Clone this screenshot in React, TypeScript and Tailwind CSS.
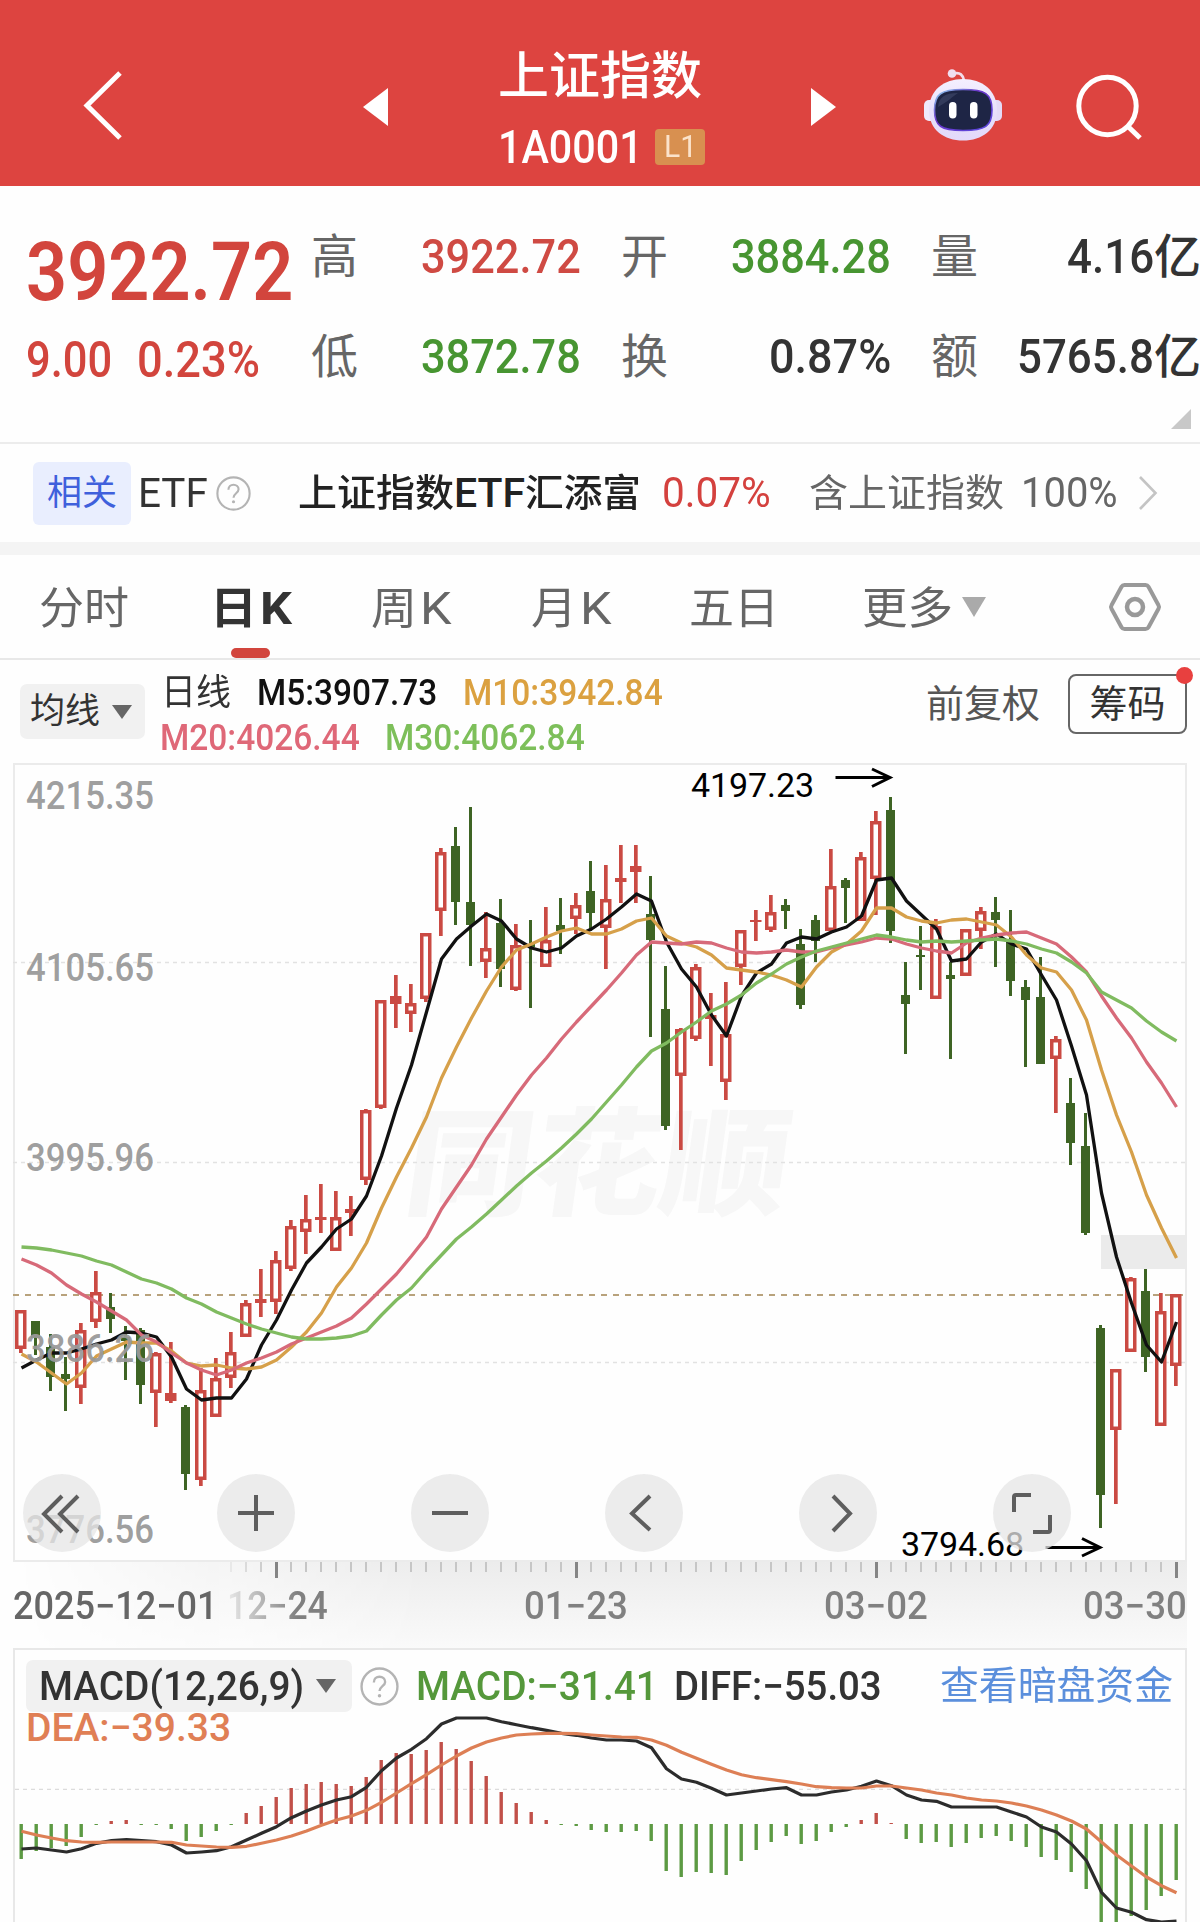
import { useLayoutEffect, useRef, type ReactNode } from 'react';

type Candle = [kind: 'r' | 'g', high: number, top: number, bottom: number, low: number];

const STEP = 15;

// y values are in chart pixels
const CANDLES: Candle[] = [
  ['r', 550, 550, 589, 593], ['g', 561, 561, 578, 595], ['g', 574, 587, 617, 631], ['g', 597, 614, 619, 651],
  ['r', 563, 570, 628, 644], ['r', 511, 532, 562, 568], ['g', 533, 547, 559, 573], ['g', 566, 577, 581, 620],
  ['g', 568, 570, 625, 644], ['r', 592, 593, 633, 667], ['r', 582, 633, 641, 643], ['g', 645, 647, 714, 730],
  ['r', 608, 630, 720, 726], ['r', 598, 618, 657, 657], ['r', 572, 592, 618, 628], ['r', 540, 543, 577, 577],
  ['r', 509, 539, 543, 557], ['r', 491, 500, 542, 554], ['r', 460, 466, 509, 511], ['r', 435, 459, 472, 494],
  ['r', 424, 457, 460, 473], ['r', 431, 457, 491, 491], ['r', 436, 449, 453, 476], ['r', 349, 350, 420, 425],
  ['r', 240, 240, 348, 349], ['r', 215, 236, 244, 268], ['r', 224, 243, 254, 272], ['r', 173, 173, 239, 242],
  ['r', 88, 92, 151, 176], ['g', 67, 86, 142, 165], ['g', 47, 142, 165, 206], ['r', 152, 188, 202, 218],
  ['g', 139, 163, 209, 227], ['r', 164, 185, 230, 231], ['g', 160, 184, 187, 248], ['r', 147, 180, 207, 207],
  ['g', 138, 165, 171, 194], ['r', 133, 145, 159, 174], ['g', 101, 131, 153, 171], ['r', 105, 139, 168, 209],
  ['r', 85, 118, 122, 143], ['r', 85, 106, 112, 143], ['g', 116, 154, 180, 277], ['g', 206, 249, 366, 370],
  ['r', 268, 269, 316, 390], ['r', 204, 207, 279, 281], ['r', 233, 255, 259, 306], ['r', 222, 274, 322, 340],
  ['r', 170, 170, 207, 225], ['r', 150, 160, 162, 181], ['r', 135, 152, 170, 172], ['g', 139, 145, 151, 169],
  ['g', 169, 184, 245, 249], ['g', 155, 160, 181, 202], ['r', 89, 126, 171, 171], ['g', 118, 120, 128, 163],
  ['r', 92, 97, 161, 161], ['r', 51, 61, 119, 155], ['g', 37, 50, 171, 183], ['g', 202, 235, 244, 294],
  ['g', 166, 195, 197, 230], ['r', 159, 166, 239, 239], ['g', 202, 215, 219, 299], ['r', 169, 169, 216, 216],
  ['r', 147, 151, 171, 189], ['g', 137, 152, 160, 207], ['g', 150, 180, 221, 236], ['g', 220, 227, 240, 307],
  ['g', 197, 237, 304, 304], ['r', 276, 279, 299, 353], ['g', 318, 343, 383, 405], ['g', 353, 386, 473, 475],
  ['g', 565, 568, 735, 768], ['r', 609, 609, 670, 744], ['r', 517, 518, 592, 592], ['g', 509, 531, 597, 612],
  ['r', 533, 551, 666, 666], ['r', 534, 534, 606, 626],
];

const M5 = [
  608, 600, 593, 593, 589, 584, 580, 572, 573, 577, 597, 629, 640, 638, 638, 619, 585, 560, 530, 503, 487, 469, 459,
  436, 396, 348, 305, 252, 199, 179, 166, 154, 161, 179, 188, 192, 188, 176, 169, 159, 147, 134, 141, 182, 209, 227,
  255, 276, 236, 213, 204, 183, 177, 179, 172, 167, 156, 120, 118, 141, 155, 169, 201, 199, 182, 174, 184, 189, 215,
  240, 286, 335, 433, 497, 543, 585, 602, 562,
];
const M10 = [
  594, 602, 613, 624, 613, 596, 589, 582, 583, 583, 591, 603, 606, 605, 608, 609, 607, 600, 587, 572, 553, 527, 508,
  483, 448, 417, 388, 357, 318, 287, 258, 231, 207, 190, 184, 177, 171, 168, 174, 174, 169, 161, 158, 176, 183, 187,
  195, 208, 210, 212, 215, 220, 227, 207, 192, 184, 171, 148, 148, 157, 161, 163, 160, 159, 162, 165, 177, 195, 208,
  212, 230, 260, 310, 355, 392, 435, 468, 498,
];
const M20 = [
  499, 505, 513, 525, 534, 542, 551, 560, 575, 582, 593, 603, 610, 615, 610, 603, 598, 592, 584, 578, 572, 566, 558,
  544, 529, 514, 496, 477, 449, 427, 405, 379, 357, 335, 315, 298, 279, 262, 246, 230, 213, 195, 182, 183, 184, 182,
  183, 188, 192, 193, 192, 190, 192, 192, 188, 185, 182, 178, 179, 184, 188, 191, 193, 183, 178, 175, 173, 172, 178,
  184, 197, 212, 236, 258, 278, 302, 323, 347,
];
const M30 = [
  487, 488, 490, 493, 496, 501, 505, 512, 519, 523, 529, 538, 544, 552, 558, 564, 569, 573, 577, 579, 579, 578, 576,
  571, 555, 540, 528, 511, 495, 479, 467, 454, 440, 426, 413, 401, 388, 374, 359, 342, 325, 307, 291, 283, 272, 262,
  251, 244, 235, 223, 214, 204, 197, 191, 187, 183, 179, 175, 177, 180, 182, 181, 182, 181, 180, 179, 181, 184, 189,
  193, 202, 213, 232, 240, 248, 261, 272, 281,
];

// histogram heights, positive goes down (green)
const MACD_BARS = [
  35, 27, 24, 22, 13, 1, -3, -4, 1, 1, 5, 17, 13, 7, 1, -11, -18, -27, -36, -40, -42, -40, -38, -47, -64, -71, -70,
  -74, -82, -75, -63, -48, -32, -21, -12, -4, 1, 2, 6, 8, 8, 7, 17, 47, 53, 48, 49, 51, 37, 26, 18, 12, 20, 17, 8, 3,
  -4, -11, -1, 15, 19, 18, 23, 19, 14, 12, 17, 23, 33, 36, 48, 65, 100, 100, 92, 86, 72, 56,
];
// DIFF and DEA are stored in thirds of a pixel
const DIFF = [
  627, 624, 630, 636, 626, 610, 602, 599, 602, 605, 615, 639, 636, 632, 620, 600, 580, 560, 533, 513, 495, 480, 470,
  442, 392, 354, 328, 296, 252, 234, 234, 234, 245, 254, 263, 271, 280, 286, 294, 300, 300, 303, 323, 386, 417, 427,
  445, 465, 459, 453, 447, 443, 465, 465, 456, 450, 439, 423, 437, 465, 480, 484, 501, 501, 501, 501, 516, 531, 561,
  576, 612, 662, 757, 804, 817, 839, 846, 843,
];
const DEA = [
  574, 585, 594, 602, 606, 607, 606, 606, 606, 606, 607, 615, 618, 621, 622, 619, 610, 600, 588, 573, 556, 540, 528,
  511, 487, 459, 431, 404, 375, 348, 324, 306, 294, 285, 282, 280, 280, 281, 285, 288, 291, 292, 300, 316, 337, 355,
  373, 390, 404, 413, 419, 425, 432, 440, 443, 444, 444, 438, 438, 444, 450, 459, 465, 474, 480, 483, 489, 498, 510,
  525, 543, 567, 606, 645, 678, 711, 737, 758,
];

const AXIS_LABELS = [
  { text: '4215.35', y: 49 },
  { text: '4105.65', y: 221 },
  { text: '3995.96', y: 411 },
  { text: '3886.26', y: 601.5 },
  { text: '3776.56', y: 783 },
];

function toPoints(values: number[], scale = 1) {
  return values.map((v, i) => `${21.5 + i * STEP},${(v * scale).toFixed(1)}`).join(' ');
}

// Squeezes or stretches one line of text to exactly `w` pixels
function Fit({ w, className = '', children }: { w: number; className?: string; children: ReactNode }) {
  const ref = useRef<HTMLSpanElement>(null);

  useLayoutEffect(() => {
    const el = ref.current;
    if (el) el.style.transform = `scaleX(${w / el.offsetWidth})`;
  }, [w, children]);

  return (
    <span className={`block shrink-0 ${className}`} style={{ width: w }}>
      <span ref={ref} className="inline-block origin-left align-top whitespace-nowrap">
        {children}
      </span>
    </span>
  );
}

function Robot() {
  return (
    <svg width="78" height="72" viewBox="0 0 78 72">
      <defs>
        <linearGradient id="shell" x1="0" y1="0" x2="0" y2="1">
          <stop offset="0" stopColor="#f4efff" />
          <stop offset="0.6" stopColor="#e6defa" />
          <stop offset="1" stopColor="#e3d9fb" />
        </linearGradient>
        <linearGradient id="rim" x1="0" y1="0" x2="1" y2="1">
          <stop offset="0" stopColor="#8fd8f0" />
          <stop offset="0.4" stopColor="#6a35c9" />
          <stop offset="1" stopColor="#5a4be0" />
        </linearGradient>
      </defs>
      <path d="M30 4.5c6-1.500 9 1.500 10 7" fill="none" stroke="#f3dcea" strokeWidth="2.800" />
      <circle cx="28" cy="4.500" r="4.300" fill="#f0def0" />
      <rect x="0" y="31" width="12" height="21" rx="5" fill="#efe9fb" />
      <rect x="66" y="31" width="12" height="21" rx="5" fill="#e4dbf7" />
      <path d="M39 10c19 0 34 11 34 31S58 71.500 39 71.500 5 61 5 41 20 10 39 10Z" fill="url(#shell)" />
      <path
        d="M39 20.500c22 0 29 4 29 20.500S61 61.500 39 61.500 10.500 57 10.500 41 17 20.500 39 20.500Z"
        fill="#1e2545"
        stroke="url(#rim)"
        strokeWidth="1.600"
      />
      <path d="M14 38c1-10 7-14 20-14-6 4-9 8-20 14Z" fill="#5b6588" opacity="0.35" />
      <rect x="25" y="33" width="7.500" height="16.500" rx="3.700" fill="#fff" />
      <rect x="46" y="33" width="7.500" height="16.500" rx="3.700" fill="#fff" />
    </svg>
  );
}

function Header() {
  return (
    <header className="flex h-[186px] shrink-0 bg-[#dd4440] text-white">
      <svg className="mt-[70px] ml-[82px] shrink-0" width="42" height="72" viewBox="0 0 42 72">
        <path d="M38 3 5 35.500 38 68" fill="none" stroke="#fff" strokeWidth="5" />
      </svg>
      <svg className="mt-[88px] ml-[239px] shrink-0" width="25" height="38" viewBox="0 0 25 38">
        <path d="M25 0v38L0 19Z" fill="#fff" />
      </svg>
      <div className="mt-[47px] ml-[110px] w-[210px] shrink-0">
        <Fit w={204} className="text-[51px]/[60px] font-medium">上证指数</Fit>
        <div className="flex h-[80px] items-center">
          <Fit w={145} className="text-[47px]/[80px] font-medium">1A0001</Fit>
          <span className="ml-[12px] flex h-9 w-[50px] items-center justify-center rounded-[4px] bg-[#d89050] text-[#fbe3cb]">
            <Fit w={33} className="text-[31px]/[36px]">L1</Fit>
          </span>
        </div>
      </div>
      <svg className="mt-[88px] ml-[103px] shrink-0" width="25" height="38" viewBox="0 0 25 38">
        <path d="M0 0v38l25-19Z" fill="#fff" />
      </svg>
      <div className="mt-[69px] ml-[88px] shrink-0">
        <Robot />
      </div>
      <svg className="mt-[72px] ml-[72px] shrink-0" width="70" height="70" viewBox="0 0 70 70">
        <circle cx="33.500" cy="34" r="28.700" fill="none" stroke="#fff" strokeWidth="5" />
        <path d="M53.500 54 66 66" stroke="#fff" strokeWidth="5" />
      </svg>
    </header>
  );
}

const QUOTES = [
  { label: '高', value: '3922.72', w: 160, color: 'text-[#cf4a43]' },
  { label: '开', value: '3884.28', w: 160, color: 'text-[#479531]' },
  { label: '量', value: '4.16', unit: '亿', w: 87, color: 'text-[#333]' },
  { label: '低', value: '3872.78', w: 160, color: 'text-[#479531]' },
  { label: '换', value: '0.87%', w: 122, color: 'text-[#333]' },
  { label: '额', value: '5765.8', unit: '亿', w: 137, color: 'text-[#333]' },
];

function Quote() {
  return (
    <section className="flex h-[258px] shrink-0 border-b-2 border-[#ececec] pt-[21px]">
      <div className="w-[311px] shrink-0 pt-[20px] pl-[26px] text-[#d2453d]">
        <Fit w={267} className="text-[82px]/[90px] font-semibold">3922.72</Fit>
        <div className="mt-[2px] flex gap-[25px] font-medium">
          <Fit w={86} className="text-[50px]/[82px]">9.00</Fit>
          <Fit w={123} className="text-[50px]/[82px]">0.23%</Fit>
        </div>
      </div>
      <div className="relative shrink-0">
        <div className="grid grid-cols-[270px_270px_270px] gap-x-[40px]">
          {QUOTES.map((q) => (
            <div key={q.label} className="flex h-[100px] items-center justify-between">
              <span className="text-[47px]/[100px] text-[#666]">{q.label}</span>
              <span className={`flex font-medium ${q.color}`}>
                <Fit w={q.w} className="text-[49px]/[100px]">{q.value}</Fit>
                {q.unit && <Fit w={47} className="text-[47px]/[100px]">{q.unit}</Fit>}
              </span>
            </div>
          ))}
        </div>
        <svg className="absolute top-[202px] left-[860px]" width="20" height="20" viewBox="0 0 20 20">
          <path d="M20 0v20H0Z" fill="#c8c8c8" />
        </svg>
      </div>
    </section>
  );
}

function Help({ size }: { size: number }) {
  return (
    <svg className="shrink-0" width={size} height={size} viewBox="0 0 38 38">
      <circle cx="19" cy="19" r="17.500" fill="none" stroke="#b4b4b4" strokeWidth="2.300" />
      <path d="M13.500 15c0-3.500 2.500-5.500 5.500-5.500s5.500 2 5.500 5c0 4-5.500 4.500-5.500 9" fill="none" stroke="#b4b4b4" strokeWidth="2.300" />
      <circle cx="19" cy="28" r="1.700" fill="#b4b4b4" />
    </svg>
  );
}

function RelatedEtf() {
  return (
    <section className="flex h-[98px] shrink-0 items-center">
      <span className="ml-[33px] flex h-[63px] w-[98px] shrink-0 items-center justify-center rounded-[6px] bg-[#e9eefe] text-[35px]/[65px] text-[#3f60dc]">
        相关
      </span>
      <Fit w={70} className="ml-[7px] text-[41px]/[98px] text-[#333]">ETF</Fit>
      <span className="ml-[8px] shrink-0">
        <Help size={35} />
      </span>
      <span className="ml-[47px] flex text-[#222]">
        <Fit w={156} className="text-[38px]/[100px] font-medium">上证指数</Fit>
        <Fit w={71} className="text-[41px]/[100px] font-medium">ETF</Fit>
        <Fit w={116} className="text-[38px]/[100px] font-medium">汇添富</Fit>
      </span>
      <Fit w={109} className="ml-[21px] text-[42px]/[100px] text-[#d4413e]">0.07%</Fit>
      <Fit w={195} className="ml-[38px] text-[38px]/[100px] text-[#666]">含上证指数</Fit>
      <Fit w={97} className="ml-[17px] text-[42px]/[100px] text-[#666]">100%</Fit>
      <svg className="ml-[20px] shrink-0" width="20" height="36" viewBox="0 0 20 36">
        <path d="M2 2l15.500 16L2 34" fill="none" stroke="#c4c4c4" strokeWidth="2.600" />
      </svg>
    </section>
  );
}

function Tabs() {
  return (
    <nav className="flex h-[105px] shrink-0 border-b-2 border-[#e8e8e8] text-[44px]/[108px] text-[#666]">
      <Fit w={90} className="ml-[39px]">分时</Fit>
      <div className="relative ml-[81px] flex gap-[3px] font-bold text-[#333]">
        <Fit w={47}>日</Fit>
        <Fit w={32}>K</Fit>
        <span className="absolute bottom-0 left-[21px] h-[10px] w-[39px] rounded-[5px] bg-[#d2453d]" />
      </div>
      <div className="ml-[79px] flex gap-[3px]">
        <Fit w={46}>周</Fit>
        <Fit w={32}>K</Fit>
      </div>
      <div className="ml-[79px] flex gap-[3px]">
        <Fit w={46}>月</Fit>
        <Fit w={32}>K</Fit>
      </div>
      <Fit w={90} className="ml-[77px]">五日</Fit>
      <Fit w={91} className="ml-[83px]">更多</Fit>
      <svg className="mt-[42px] ml-[9px] shrink-0" width="24" height="20" viewBox="0 0 24 20">
        <path d="M0 0h24L12 20Z" fill="#aaa" />
      </svg>
      <svg className="mt-[27px] ml-[122px] shrink-0" width="54" height="50" viewBox="0 0 54 50">
        <path
          d="M16.500 3h21q2 0 3 1.700l10 18.600q1 1.700 0 3.400l-10 18.600q-1 1.700-3 1.700h-21q-2 0-3-1.700l-10-18.600q-1-1.700 0-3.400l10-18.600q1-1.700 3-1.700Z"
          fill="none"
          stroke="#999"
          strokeWidth="4"
        />
        <circle cx="27" cy="25" r="8" fill="none" stroke="#999" strokeWidth="4.500" />
      </svg>
    </nav>
  );
}

function Legend() {
  return (
    <section className="flex h-[100px] shrink-0 items-start">
      <div className="mt-[24px] ml-5 flex h-[55px] w-[125px] items-center rounded-[7px] bg-[#f1f1f1] pl-[10px]">
        <span className="text-[35px]/[59px] text-[#333]">均线</span>
        <svg className="ml-[12px]" width="20" height="14" viewBox="0 0 20 14">
          <path d="M0 0h20L10 14Z" fill="#666" />
        </svg>
      </div>
      <div className="mt-[11px] ml-[15px] text-[36px]/[45px] font-medium">
        <div className="flex">
          <Fit w={70} className="ml-[1px] font-normal text-[#333]">日线</Fit>
          <Fit w={180} className="ml-[26px] text-[#111]">M5:3907.73</Fit>
          <Fit w={200} className="ml-[26px] text-[#dba140]">M10:3942.84</Fit>
        </div>
        <div className="flex">
          <Fit w={200} className="text-[#df6878]">M20:4026.44</Fit>
          <Fit w={200} className="ml-[25px] text-[#7dbf5a]">M30:4062.84</Fit>
        </div>
      </div>
      <span className="mt-[16px] ml-auto text-[38px]/[57px] text-[#555]">前复权</span>
      <div className="relative mt-[14px] mr-[13px] ml-[28px] flex h-[60px] w-[119px] items-center justify-center rounded-[8px] border-2 border-[#666] text-[38px]/[57px] text-[#333]">
        筹码
        <span className="absolute -top-[9px] -right-[8px] size-[17px] rounded-full bg-[#e8403f]" />
      </div>
    </section>
  );
}

const BUTTONS = [
  { name: 'rewind', d: 'M39 22 21 40l18 18M55 22 37 40l18 18' },
  { name: 'zoom-in', d: 'M39 21v36M21 39h36' },
  { name: 'zoom-out', d: 'M21 39h36' },
  { name: 'prev', d: 'M45 22 27 39.500 45 56' },
  { name: 'next', d: 'M34 22l17 17.500L34 57' },
  { name: 'expand', d: 'M38 21H23q-2 0-2 2v15M57 41v15q0 2-2 2H40' },
];

function CandleShape({ candle, x }: { candle: Candle; x: number }) {
  const [kind, high, top, bottom, low] = candle;
  if (kind === 'g') {
    return (
      <g fill="#3e6424">
        <rect x={x - 1.500} y={high} width="3" height={low - high} />
        <rect x={x - 4.500} y={top} width="9" height={bottom - top} />
      </g>
    );
  }
  return (
    <g fill="#ca4a43">
      <rect x={x - 1.500} y={high} width="3.700" height={top - high} />
      <rect x={x - 1.500} y={bottom} width="3.700" height={low - bottom} />
      <rect x={x - 5.500} y={top} width="11.500" height={bottom - top} />
      {bottom - top > 8 && <rect x={x - 2} y={top + 3.500} width="4.500" height={bottom - top - 7} fill="#fff" />}
    </g>
  );
}

function KLineChart() {
  return (
    <section className="relative h-[802px] shrink-0">
      <svg width="1200" height="802" viewBox="0 0 1200 802" className="block overflow-visible">
        <rect x="14" y="4" width="1172" height="797" fill="none" stroke="#ebebeb" strokeWidth="2" />
        <text
          transform="translate(401 446) skewX(-8)"
          fontSize="117"
          fontWeight="900"
          textLength="383"
          lengthAdjust="spacingAndGlyphs"
          fill="#f7f7f7"
        >
          同花顺
        </text>
        {[202.5, 402.5, 602.5].map((y) => (
          <path key={y} d={`M13 ${y}H1186`} stroke="#e2e2e2" strokeWidth="1.300" strokeDasharray="4 4" />
        ))}
        <rect x="1101" y="475" width="86" height="34" fill="#ebebeb" />
        <path d="M13 535H1184" stroke="#b8a27c" strokeWidth="2" strokeDasharray="6 6" />

        {CANDLES.map((candle, i) => (
          <CandleShape key={i} candle={candle} x={20.5 + i * STEP} />
        ))}
        <g fill="none" strokeWidth="3.300" strokeLinejoin="round">
          <polyline points={toPoints(M5)} stroke="#111" />
          <polyline points={toPoints(M10)} stroke="#d6a04a" />
          <polyline points={toPoints(M20)} stroke="#d76a79" />
          <polyline points={toPoints(M30)} stroke="#80bb60" />
        </g>

        {AXIS_LABELS.map((l) => (
          <text
            key={l.text}
            x="26"
            y={l.y}
            fontSize="38"
            fontWeight="500"
            textLength="128"
            lengthAdjust="spacingAndGlyphs"
            fill="#999"
            fillOpacity="0.95"
          >
            {l.text}
          </text>
        ))}

        <g fontSize="34" fill="#000">
          <text x="691" y="36.500" textLength="123">4197.23</text>
          <text x="901" y="796" textLength="123">3794.68</text>
        </g>
        <g fill="none" stroke="#000" strokeWidth="3">
          <path d="M835.500 17.500H890M872 9l18 8.500L872 26.500" />
          <path d="M1045.500 787.500H1100M1082 778.500l18 9-18 8.500" />
        </g>
      </svg>
      <div className="absolute top-[714px] left-[23px] flex gap-[116px]">
        {BUTTONS.map((b) => (
          <button key={b.name} aria-label={b.name} className="size-[78px] rounded-full bg-[#e6e6e6]/75">
            <svg width="78" height="78" viewBox="0 0 78 78" fill="none" stroke="#5e5e5e" strokeWidth="4">
              <path d={b.d} />
            </svg>
          </button>
        ))}
      </div>
    </section>
  );
}

function TimeAxis() {
  return (
    <section className="relative h-[86px] shrink-0 text-[38px]/[88px] font-medium text-[#808080]">
      <div className="absolute inset-y-0 right-[13px] left-[14px] bg-linear-to-b from-[#ececec] to-[#fafafa] mask-l-from-65% mask-l-to-100%" />
      <svg className="absolute inset-0" width="1200" height="16" viewBox="0 0 1200 16">
        {Array.from({ length: 64 }, (_, n) => n + 14).map((i) => {
          const major = i % 20 === 17;
          return (
            <rect
              key={i}
              x={20 + i * STEP}
              y="0"
              width={major ? 3 : 2}
              height={major ? 16 : 10}
              fill={major ? '#858585' : '#c6c6c6'}
              opacity={i < 17 ? (i - 13) * 0.28 : 1}
            />
          );
        })}
      </svg>
      <div className="relative flex">
        <Fit w={205} className="ml-[13px] text-[#666]">2025−12−01</Fit>
        <Fit w={101} className="ml-[9px] mask-l-from-30% mask-l-to-110%">12−24</Fit>
        <Fit w={104} className="ml-[196px]">01−23</Fit>
        <Fit w={104} className="ml-[196px]">03−02</Fit>
        <Fit w={104} className="ml-[155px]">03−30</Fit>
      </div>
    </section>
  );
}

function MacdPanel() {
  return (
    <section className="relative h-[274px] shrink-0">
      <svg className="absolute inset-0" width="1200" height="274" viewBox="0 0 1200 274">
        <path d="M14 280V1H1186V280" fill="none" stroke="#e8e8e8" strokeWidth="2" />
        <path d="M15 141.300H1186" stroke="#dcdcdc" strokeWidth="1.200" strokeDasharray="4 4" />
        {MACD_BARS.map((h, i) => (
          <rect
            key={i}
            x={19.5 + i * STEP}
            y={h > 0 ? 176 : 176 + h}
            width="3.400"
            height={Math.abs(h)}
            fill={h > 0 ? '#5c9a43' : '#c15049'}
          />
        ))}
        <g fill="none" strokeWidth="3.200" strokeLinejoin="round" transform="translate(0 -8)">
          <polyline points={toPoints(DIFF, 1 / 3)} stroke="#2c2c2c" />
          <polyline points={toPoints(DEA, 1 / 3)} stroke="#dd7f55" />
        </g>
      </svg>
      <div className="relative flex h-[64px] items-center pt-[12px] text-[40px]/[55px] font-medium">
        <div className="ml-[26px] flex h-[52px] w-[326px] items-center rounded-[7px] bg-[#f1f1f1]">
          <Fit w={265} className="ml-[13px] text-[#333]">MACD(12,26,9)</Fit>
          <svg className="ml-[12px]" width="20" height="14" viewBox="0 0 20 14">
            <path d="M0 0h20L10 14Z" fill="#666" />
          </svg>
        </div>
        <span className="ml-[8px]">
          <Help size={39} />
        </span>
        <Fit w={242} className="ml-[17px] text-[#55983b]">MACD:−31.41</Fit>
        <Fit w={208} className="ml-[16px] text-[#333]">DIFF:−55.03</Fit>
        <Fit w={233} className="ml-[58px] text-[39px]/[56px] font-normal text-[#5b8fdc]">查看暗盘资金</Fit>
      </div>
      <div className="relative pl-[26px] text-[39px]/[33px] font-medium text-[#e07f55]">
        <Fit w={205}>DEA:−39.33</Fit>
      </div>
    </section>
  );
}

export default function App() {
  return (
    <main className="flex h-[1922px] w-[1200px] flex-col overflow-hidden bg-[#fefefe] font-[Roboto,'Noto_Sans_CJK_SC',sans-serif]">
      <Header />
      <Quote />
      <RelatedEtf />
      <div className="h-[13px] shrink-0 bg-[#f4f4f4]" />
      <Tabs />
      <Legend />
      <KLineChart />
      <TimeAxis />
      <MacdPanel />
    </main>
  );
}
